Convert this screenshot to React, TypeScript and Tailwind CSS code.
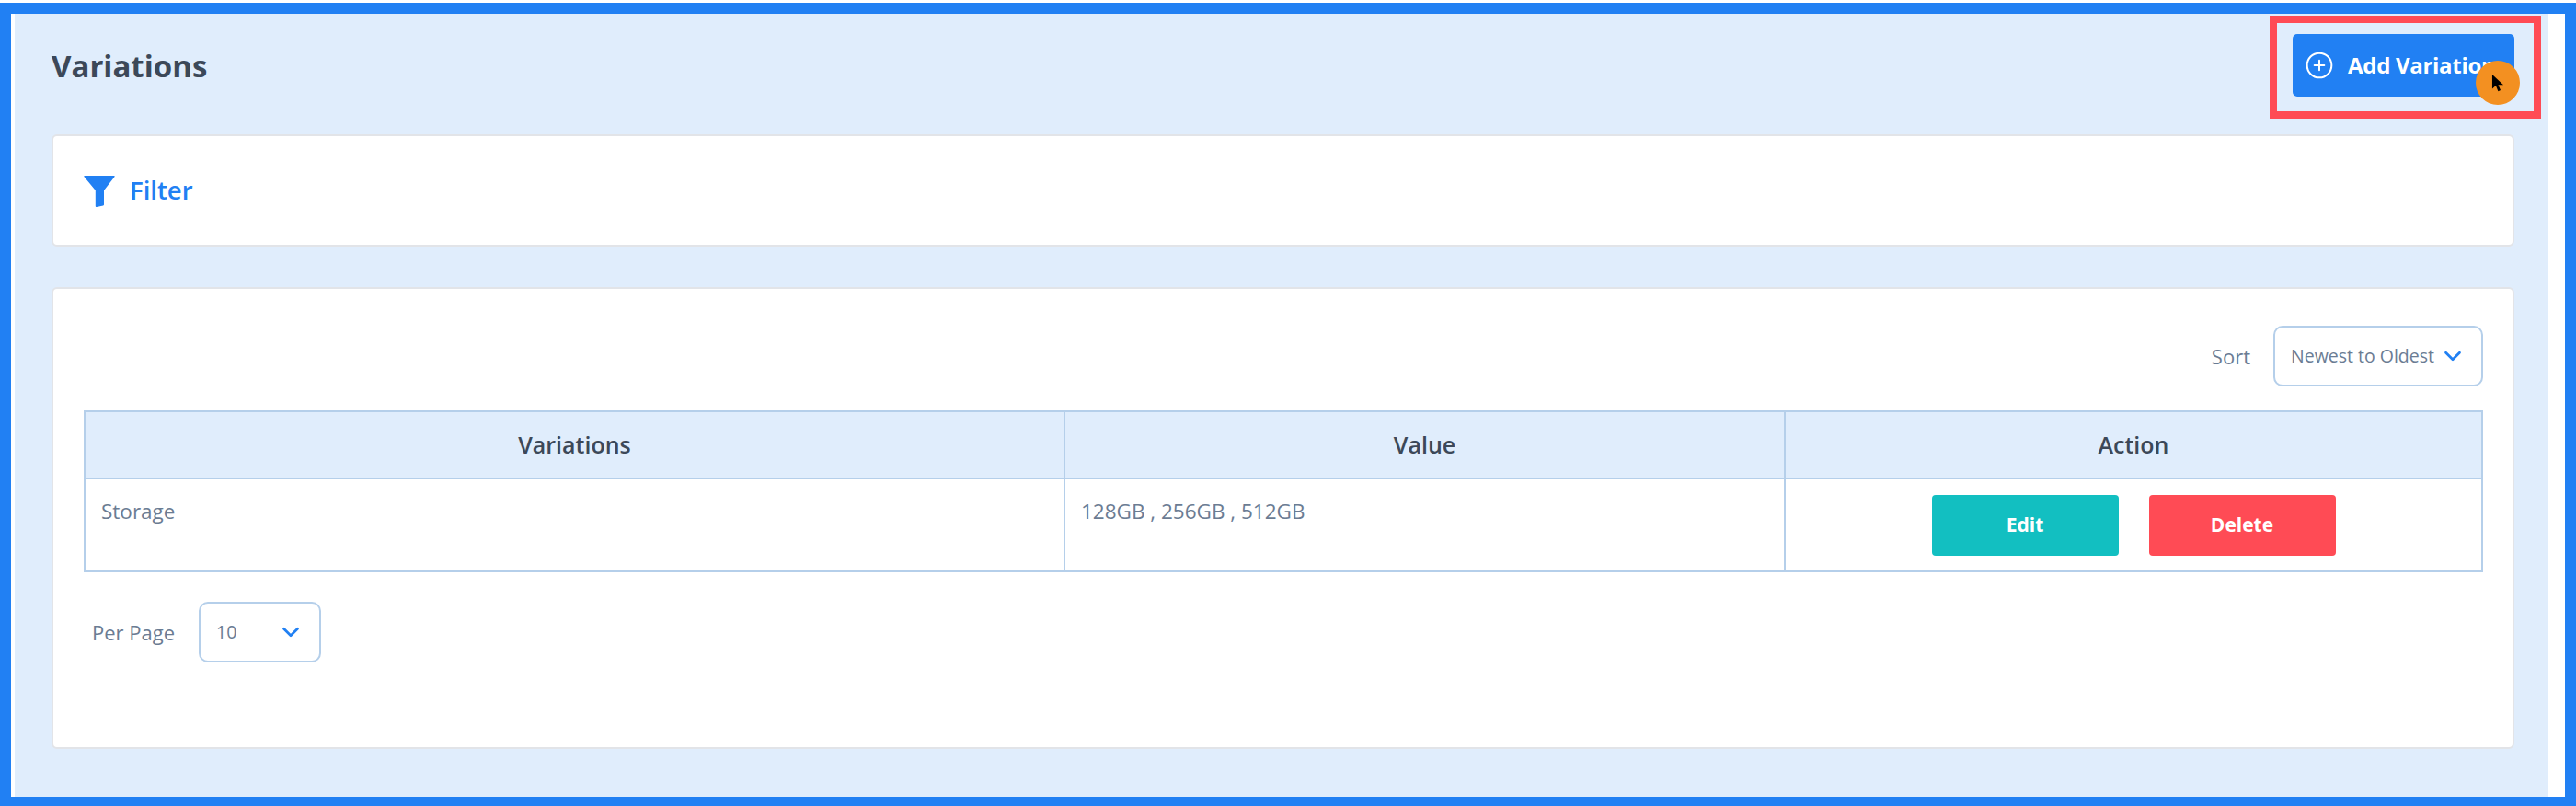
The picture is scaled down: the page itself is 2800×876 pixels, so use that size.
import { ChevronDown, CirclePlus } from 'lucide-react';

const font = { fontFamily: '"Open Sans", sans-serif' };

function FilterIcon() {
  return (
    <svg viewBox="0 0 34 35" className="w-[34px] h-[35px]" fill="#2180f3">
      <path d="M1 1h32c.6 0 .9.6.6 1.1L22 17v15.5c0 .5-.3.8-.8 1L14 35c-.7.1-1.2-.3-1.2-1V17L.4 2.1C0 1.6.4 1 1 1z" />
    </svg>
  );
}

function SelectBox({ label, className }: { label: string; className: string }) {
  return (
    <div className={`flex items-center justify-between h-[66px] border-2 border-[#b5cfea] rounded-[10px] bg-white ${className}`}>
      <span className="text-[19.5px] text-[#6b7c93] whitespace-nowrap">{label}</span>
      <ChevronDown className="w-[30px] h-[30px] text-[#2180f3] shrink-0" strokeWidth={2.2} />
    </div>
  );
}

function App() {
  return (
    <div className="w-[2800px] h-[876px] overflow-hidden bg-white pt-[3px]" style={font}>
      <div className="relative h-[873px] border-x-[12px] border-t-[12px] border-b-[10px] border-[#2180f3] bg-white pl-1 pr-[18px]">
        <div className="h-full bg-[#e0edfc] pl-[40px] pr-[37px] pt-[22px]">
          <div className="flex items-center justify-between h-[68px] mb-[41px]">
            <h1 className="text-[33px] font-bold text-[#3c4858] leading-none">Variations</h1>
            <button className="flex items-center gap-[15px] w-[241px] h-[68px] pl-[13px] rounded-[5px] bg-[#2180f3] text-white text-[24px] font-bold tracking-[-0.3px] whitespace-nowrap overflow-hidden">
              <CirclePlus className="w-[32px] h-[32px]" strokeWidth={1.5} />
              Add Variation
            </button>
          </div>

          <div className="flex items-center gap-[16px] h-[122px] pl-[33px] bg-white border-2 border-[#e2e4e8] rounded-[6px]">
            <FilterIcon />
            <span className="text-[27.5px] font-semibold text-[#2180f3]">Filter</span>
          </div>

          <div className="h-[502px] mt-[44px] bg-white border-2 border-[#e2e4e8] rounded-[6px] pl-[33px] pr-[32px] pt-[40px]">
            <div className="flex items-center justify-end gap-[25px] mb-[26px]">
              <span className="text-[22px] text-[#6b7c93]">Sort</span>
              <SelectBox label="Newest to Oldest" className="w-[228px] pl-[17px] pr-[16px]" />
            </div>

            <table className="w-full table-fixed border-collapse border-2 border-[#b5cfea] text-[22.5px]">
              <colgroup>
                <col className="w-[1065px]" />
                <col className="w-[783px]" />
                <col />
              </colgroup>
              <thead>
                <tr className="h-[73px] bg-[#e0edfc] text-[#3c4858]">
                  <th className="border-2 border-[#b5cfea] font-semibold text-[25px]">Variations</th>
                  <th className="border-2 border-[#b5cfea] font-semibold text-[25px]">Value</th>
                  <th className="border-2 border-[#b5cfea] font-semibold text-[25px]">Action</th>
                </tr>
              </thead>
              <tbody>
                <tr className="h-[101px] text-[#6b7c93]">
                  <td className="border-2 border-[#b5cfea] align-top pl-[17px] pt-[18px]">Storage</td>
                  <td className="border-2 border-[#b5cfea] align-top pl-[17px] pt-[18px]">128GB , 256GB , 512GB</td>
                  <td className="border-2 border-[#b5cfea]">
                    <div className="flex justify-center gap-[33px]">
                      <button className="w-[203px] h-[66px] rounded-[4px] bg-[#12bfc1] text-white text-[21px] font-bold">Edit</button>
                      <button className="w-[203px] h-[66px] rounded-[4px] bg-[#ff4b55] text-white text-[21px] font-bold">Delete</button>
                    </div>
                  </td>
                </tr>
              </tbody>
            </table>

            <div className="flex items-center gap-[26px] mt-[32px] pl-[9px]">
              <span className="text-[22px] text-[#6b7c93]">Per Page</span>
              <SelectBox label="10" className="w-[133px] pl-[17px] pr-[16px]" />
            </div>
          </div>
        </div>

        {/* highlight box and cursor sit over the header button */}
        <div className="absolute left-[2455px] top-[2px] w-[295px] h-[112px] border-[8px] border-[#ff4b55]" />
        <div className="absolute left-[2679px] top-[51px] w-[48px] h-[48px] rounded-full bg-[#f39021] flex items-center justify-center">
          <svg viewBox="0 0 16 22" className="w-[14px] h-[19px]" fill="#000">
            <path d="M1 0v18l4.5-4 3 7 3-1.3-3-6.7H15z" />
          </svg>
        </div>
      </div>
    </div>
  );
}

export default App;
